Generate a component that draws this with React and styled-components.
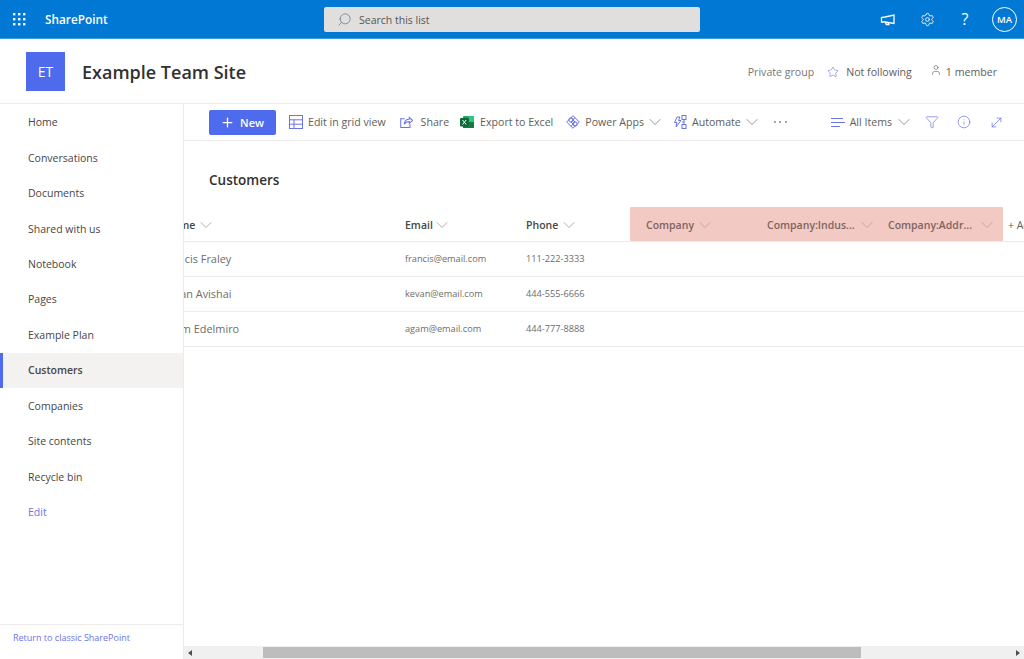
import React from 'react'
import styled, { createGlobalStyle } from 'styled-components'
import { Settings, Star, User, Plus, ChevronDown, Funnel, Info, MoveDiagonal, Search } from 'lucide-react'

const ACCENT = '#6b74e6'

const Global = createGlobalStyle`
  html, body { margin: 0; height: 100%; }
  body { font-family: "Open Sans", "Noto Sans", sans-serif; background: #fff; color: #323130; overflow: hidden; }
`

const Page = styled.div`
  width: 1024px;
  height: 659px;
  display: flex;
  flex-direction: column;
  overflow: hidden;
`

const TopBar = styled.header`
  height: 38px;
  flex: none;
  background: #0078d4;
  border-bottom: 1px solid #3f9be0;
  display: flex;
  align-items: center;
  color: #fff;
`
const Waffle = styled.svg`
  margin-left: 13px;
  width: 13px;
  height: 13px;
`
const Brand = styled.div`
  margin-left: 19px;
  width: 279px;
  font-size: 11.8px;
  font-weight: 600;
`
const SearchBox = styled.div`
  width: 376px;
  height: 25px;
  border-radius: 2px;
  background: #e1dfdd;
  display: flex;
  align-items: center;
  gap: 7px;
  padding: 1px 0 0 13px;
  box-sizing: border-box;
  color: #555;
  font-size: 10.5px;
  svg { transform: scaleX(-1); color: #5f7796; }
`
const TopIcons = styled.div`
  margin-left: auto;
  display: flex;
  align-items: center;
  padding-right: 7px;
  gap: 25px;
`
const Help = styled.span`
  font-size: 16px;
  width: 10px;
  text-align: center;
`
const Avatar = styled.div`
  width: 25px;
  height: 25px;
  border: 1px solid #fff;
  border-radius: 50%;
  box-sizing: border-box;
  display: flex;
  align-items: center;
  justify-content: center;
  font-size: 9.5px;
  font-weight: 600;
  margin-left: -3px;
`

const SiteHeader = styled.div`
  height: 65px;
  flex: none;
  display: flex;
  align-items: center;
  padding: 1px 27px 0 26px;
  box-sizing: border-box;
  border-bottom: 1px solid #edebe9;
`
const SiteLogo = styled.div`
  width: 39px;
  height: 39px;
  background: #4f6bed;
  color: #fff;
  display: flex;
  align-items: center;
  justify-content: center;
  font-size: 14px;
`
const SiteTitle = styled.h1`
  margin: 0 0 0 17px;
  font-size: 18px;
  font-weight: 600;
  color: #323130;
`
const SiteMeta = styled.div`
  margin-left: auto;
  display: flex;
  align-items: center;
  font-size: 10.6px;
  color: #605e5c;
  svg { flex: none; }
`
const MetaText = styled.span`
  color: ${p => p.$muted ? '#797775' : '#605e5c'};
`

const Body = styled.div`
  flex: 1;
  display: flex;
  min-height: 0;
`
const Nav = styled.nav`
  width: 184px;
  flex: none;
  box-sizing: border-box;
  border-right: 1px solid #edebe9;
  display: flex;
  flex-direction: column;
`
const NavList = styled.div`
  flex: 1;
  padding-top: 0.5px;
`
const NavItem = styled.div`
  height: 35.45px;
  display: flex;
  align-items: center;
  font-size: 10.5px;
  box-sizing: border-box;
  color: ${p => p.$link ? ACCENT : '#484644'};
  font-weight: ${p => p.$active ? 600 : 400};
  background: ${p => p.$active ? '#f3f2f1' : 'transparent'};
  border-left: ${p => p.$active ? `3px solid #4f6bed` : 'none'};
  padding-left: ${p => p.$active ? '25px' : '28px'};
`
const NavFooter = styled.div`
  height: 35px;
  flex: none;
  border-top: 1px solid #edebe9;
  padding: 6px 0 0 13px;
  box-sizing: border-box;
  font-size: 9px;
  color: ${ACCENT};
`

const Main = styled.main`
  flex: 1;
  min-width: 0;
  display: flex;
  flex-direction: column;
`
const CommandBar = styled.div`
  height: 37px;
  flex: none;
  box-sizing: border-box;
  border-bottom: 1px solid #edebe9;
  display: flex;
  align-items: center;
  padding: 0 20px 0 25px;
  font-size: 10.6px;
  color: #605e5c;
`
const NewButton = styled.button`
  width: 67px;
  height: 25px;
  border: 0;
  border-radius: 2px;
  background: #4f6bed;
  color: #fff;
  font: 600 11px "Open Sans", sans-serif;
  display: flex;
  align-items: center;
  justify-content: center;
  gap: 5px;
  padding: 0 1px 0 0;
  margin-right: 13px;
`
const Command = styled.div`
  display: flex;
  align-items: center;
  gap: ${p => p.$gap || 5}px;
  margin-right: ${p => p.$after || 0}px;
  white-space: nowrap;
  svg { flex: none; }
`
const Dots = styled.div`
  display: flex;
  gap: 3.5px;
  width: 13px;
  span {
    width: 2px;
    height: 2px;
    border-radius: 50%;
    background: #8a8886;
  }
`
const Spacer = styled.div`
  flex: 1;
`

const ListTitle = styled.h2`
  margin: 30px 0 0 25px;
  height: 36px;
  line-height: 19px;
  font-size: 13.5px;
  font-weight: 600;
  color: #323130;
`
const Grid = styled.div`
  overflow: hidden;
  flex: none;
`
const HeaderRow = styled.div`
  display: flex;
  height: 34px;
  margin-left: -24px;
  width: 900px;
`
const Separator = styled.div`
  height: 1px;
  background: #edebe9;
`
const Row = styled.div`
  display: flex;
  align-items: center;
  height: 34px;
  padding-bottom: 2px;
  box-sizing: border-box;
  margin-left: -22px;
  width: 900px;
  color: #6e6c6a;
`
const Col = styled.div`
  flex: none;
  width: ${p => p.$w}px;
  white-space: nowrap;
  font-size: ${p => p.$size || 9.2}px;
`
const HeaderCell = styled.div`
  flex: none;
  width: ${p => p.$w}px;
  display: flex;
  align-items: center;
  gap: ${p => p.$gap || 4}px;
  padding: 1px 0 0 ${p => p.$inset || 0}px;
  box-sizing: border-box;
  font-size: 10.5px;
  font-weight: 600;
  color: #484644;
  white-space: nowrap;
  svg { color: #8a8886; }
`
const Highlight = styled.div`
  display: flex;
  flex: none;
  width: 373px;
  height: 34px;
  padding-left: 16px;
  box-sizing: border-box;
  background: #f2c9c3;
  border-radius: 1px;
  ${HeaderCell} { color: #7f6460; svg { color: #b0908b; } }
`
const AddColumn = styled.div`
  flex: none;
  margin-left: 5px;
  padding-top: 1px;
  display: flex;
  align-items: center;
  font-size: 10.5px;
  color: #605e5c;
  white-space: nowrap;
`
const Filler = styled.div`
  flex: 1;
`
const ScrollBar = styled.div`
  height: 13px;
  flex: none;
  background: #f0f0f0;
  display: flex;
  align-items: center;
  justify-content: space-between;
  padding: 0 3px;
  box-sizing: border-box;
`
const Arrow = styled.span`
  width: 0;
  height: 0;
  border-top: 3px solid transparent;
  border-bottom: 3px solid transparent;
  ${p => p.$right ? 'border-left: 4px solid #505050;' : 'border-right: 4px solid #505050;'}
  margin: 0 1px;
`
const Thumb = styled.div`
  width: 598px;
  height: 11px;
  background: #bdbdbd;
  margin-left: 70px;
  margin-right: auto;
`
const Caret = styled(ChevronDown)`
  margin: -3.5px;
`

const MegaphoneIcon = () => (
  <svg width="15" height="15" viewBox="0 0 15 15" fill="none" stroke="#fff" strokeWidth="1.300">
    <path d="M14 3v8.500L5 10H1.500V5.500L5 5z" />
    <path d="M5.500 10.500l.8 2h2.500l-.5-1.500" />
  </svg>
)
const ExcelIcon = () => (
  <svg width="14" height="14" viewBox="0 0 14 14">
    <rect x="3" y="1" width="11" height="12" rx="1" fill="#21a366" />
    <rect x="8.500" y="1" width="5.500" height="6" fill="#33c481" />
    <rect x="3" y="7" width="11" height="6" fill="#107c41" />
    <rect x="0" y="3" width="9" height="8.500" rx="1" fill="#0b6a38" />
    <path d="M2.600 5l3.600 4.500M6.200 5L2.600 9.500" stroke="#fff" strokeWidth="1" />
  </svg>
)
const GridIcon = () => (
  <svg width="14" height="14" viewBox="0 0 14 14" fill="none" stroke={ACCENT} strokeWidth="1">
    <rect x=".5" y=".5" width="13" height="13" />
    <path d="M.5 4.800h13M.5 9.200h13M5 4.800v8.700" />
  </svg>
)
const ShareIcon = () => (
  <svg width="13" height="13" viewBox="0 0 14 14" fill="none" stroke={ACCENT} strokeWidth="1.100">
    <path d="M10 1.500l3.500 3.200L10 8V6C7 6 5.500 7 4.500 9 4.500 5.500 6.500 3.500 10 3.500z" />
    <path d="M5 3H.8v9.500h10V9" />
  </svg>
)
const PowerAppsIcon = () => (
  <svg width="14" height="14" viewBox="0 0 14 14" fill="none" stroke={ACCENT} strokeWidth="1">
    <path d="M7 .7L13.300 7 7 13.300.7 7z" />
    <circle cx="5" cy="5" r="2.200" />
    <circle cx="9" cy="9" r="2.200" />
    <path d="M9 2.700L5 7l4 4M5 11.300L9 7 5 2.700" />
  </svg>
)
const AutomateIcon = () => (
  <svg width="14" height="14" viewBox="0 0 14 14" fill="none" stroke={ACCENT} strokeWidth="1">
    <rect x="9" y=".5" width="4" height="4" />
    <rect x="9" y="9.500" width="4" height="4" />
    <path d="M9 7h2v2.500M11 4.500V7" />
    <path d="M4 2h3L5.500 5.500H8L3 12l1-4.500H1.500z" />
  </svg>
)
const ListIcon = () => (
  <svg width="14" height="11" viewBox="0 0 14 11" fill="none" stroke={ACCENT} strokeWidth="1">
    <path d="M0 1.500h12M0 5.500h14M0 9.500h9" />
  </svg>
)

const people = [
  ['francis@email.com', '111-222-3333', 'Francis Fraley'],
  ['kevan@email.com', '444-555-6666', 'Kevan Avishai'],
  ['agam@email.com', '444-777-8888', 'Agam Edelmiro']
]

const navLinks = ['Home', 'Conversations', 'Documents', 'Shared with us', 'Notebook', 'Pages', 'Example Plan', 'Customers', 'Companies', 'Site contents', 'Recycle bin']

const Chevron = () => <Caret size={20} strokeWidth={0.8} />

export default function App () {
  return (
    <Page>
      <Global />
      <TopBar>
        <Waffle viewBox="0 0 13 13" fill="#fff">
          {[0, 5, 10].flatMap(y => [0, 5, 10].map(x => <rect key={`${x}-${y}`} x={x} y={y} width="2.400" height="2.400" />))}
        </Waffle>
        <Brand>SharePoint</Brand>
        <SearchBox><Search size={15} strokeWidth={1.200} />Search this list</SearchBox>
        <TopIcons>
          <MegaphoneIcon />
          <Settings size={15} strokeWidth={1.400} />
          <Help>?</Help>
          <Avatar>MA</Avatar>
        </TopIcons>
      </TopBar>
      <SiteHeader>
        <SiteLogo>ET</SiteLogo>
        <SiteTitle>Example Team Site</SiteTitle>
        <SiteMeta>
          <MetaText $muted>Private group</MetaText>
          <Star size={12} strokeWidth={1.200} color={ACCENT} style={{ margin: '0 7px 0 13px' }} />
          <MetaText>Not following</MetaText>
          <User size={12} strokeWidth={1.200} style={{ margin: '-4px 4px 0 18px' }} />
          <MetaText>1 member</MetaText>
        </SiteMeta>
      </SiteHeader>
      <Body>
        <Nav>
          <NavList>
            {navLinks.map(link => <NavItem key={link} $active={link === 'Customers'}>{link}</NavItem>)}
            <NavItem $link>Edit</NavItem>
          </NavList>
          <NavFooter>Return to classic SharePoint</NavFooter>
        </Nav>
        <Main>
          <CommandBar>
            <NewButton><Plus size={15} strokeWidth={2} />New</NewButton>
            <Command $after={14}><GridIcon />Edit in grid view</Command>
            <Command $after={11} $gap={8}><ShareIcon />Share</Command>
            <Command $after={13} $gap={6}><ExcelIcon />Export to Excel</Command>
            <Command $after={11}><PowerAppsIcon />Power Apps<Chevron /></Command>
            <Command $after={15}><AutomateIcon />Automate<Chevron /></Command>
            <Dots><span /><span /><span /></Dots>
            <Spacer />
            <Command $after={15}><ListIcon />All Items<Chevron /></Command>
            <Funnel size={14} strokeWidth={1.200} color={ACCENT} style={{ marginRight: 18 }} />
            <Info size={14} strokeWidth={1.200} color={ACCENT} style={{ marginRight: 18 }} />
            <MoveDiagonal size={15} strokeWidth={1.200} color={ACCENT} />
          </CommandBar>
          <ListTitle>Customers</ListTitle>
          <Grid>
            <HeaderRow>
              <HeaderCell $w={245} $inset={5}>Name<Chevron /></HeaderCell>
              <HeaderCell $w={121} $gap={3}>Email<Chevron /></HeaderCell>
              <HeaderCell $w={104}>Phone<Chevron /></HeaderCell>
              <Highlight>
                <HeaderCell $w={121}>Company<Chevron /></HeaderCell>
                <HeaderCell $w={121} $gap={6}>Company:Indus...<Chevron /></HeaderCell>
                <HeaderCell $w={115} $gap={8}>Company:Addr...<Chevron /></HeaderCell>
              </Highlight>
              <AddColumn>+ Add column</AddColumn>
            </HeaderRow>
            <Separator />
            {people.map(([email, phone, name]) => (
              <React.Fragment key={email}>
                <Row>
                  <Col $w={243} $size={10.900}>{name}</Col>
                  <Col $w={121}>{email}</Col>
                  <Col $w={120}>{phone}</Col>
                </Row>
                <Separator />
              </React.Fragment>
            ))}
          </Grid>
          <Filler />
          <ScrollBar>
            <Arrow />
            <Thumb />
            <Arrow $right />
          </ScrollBar>
        </Main>
      </Body>
    </Page>
  )
}
